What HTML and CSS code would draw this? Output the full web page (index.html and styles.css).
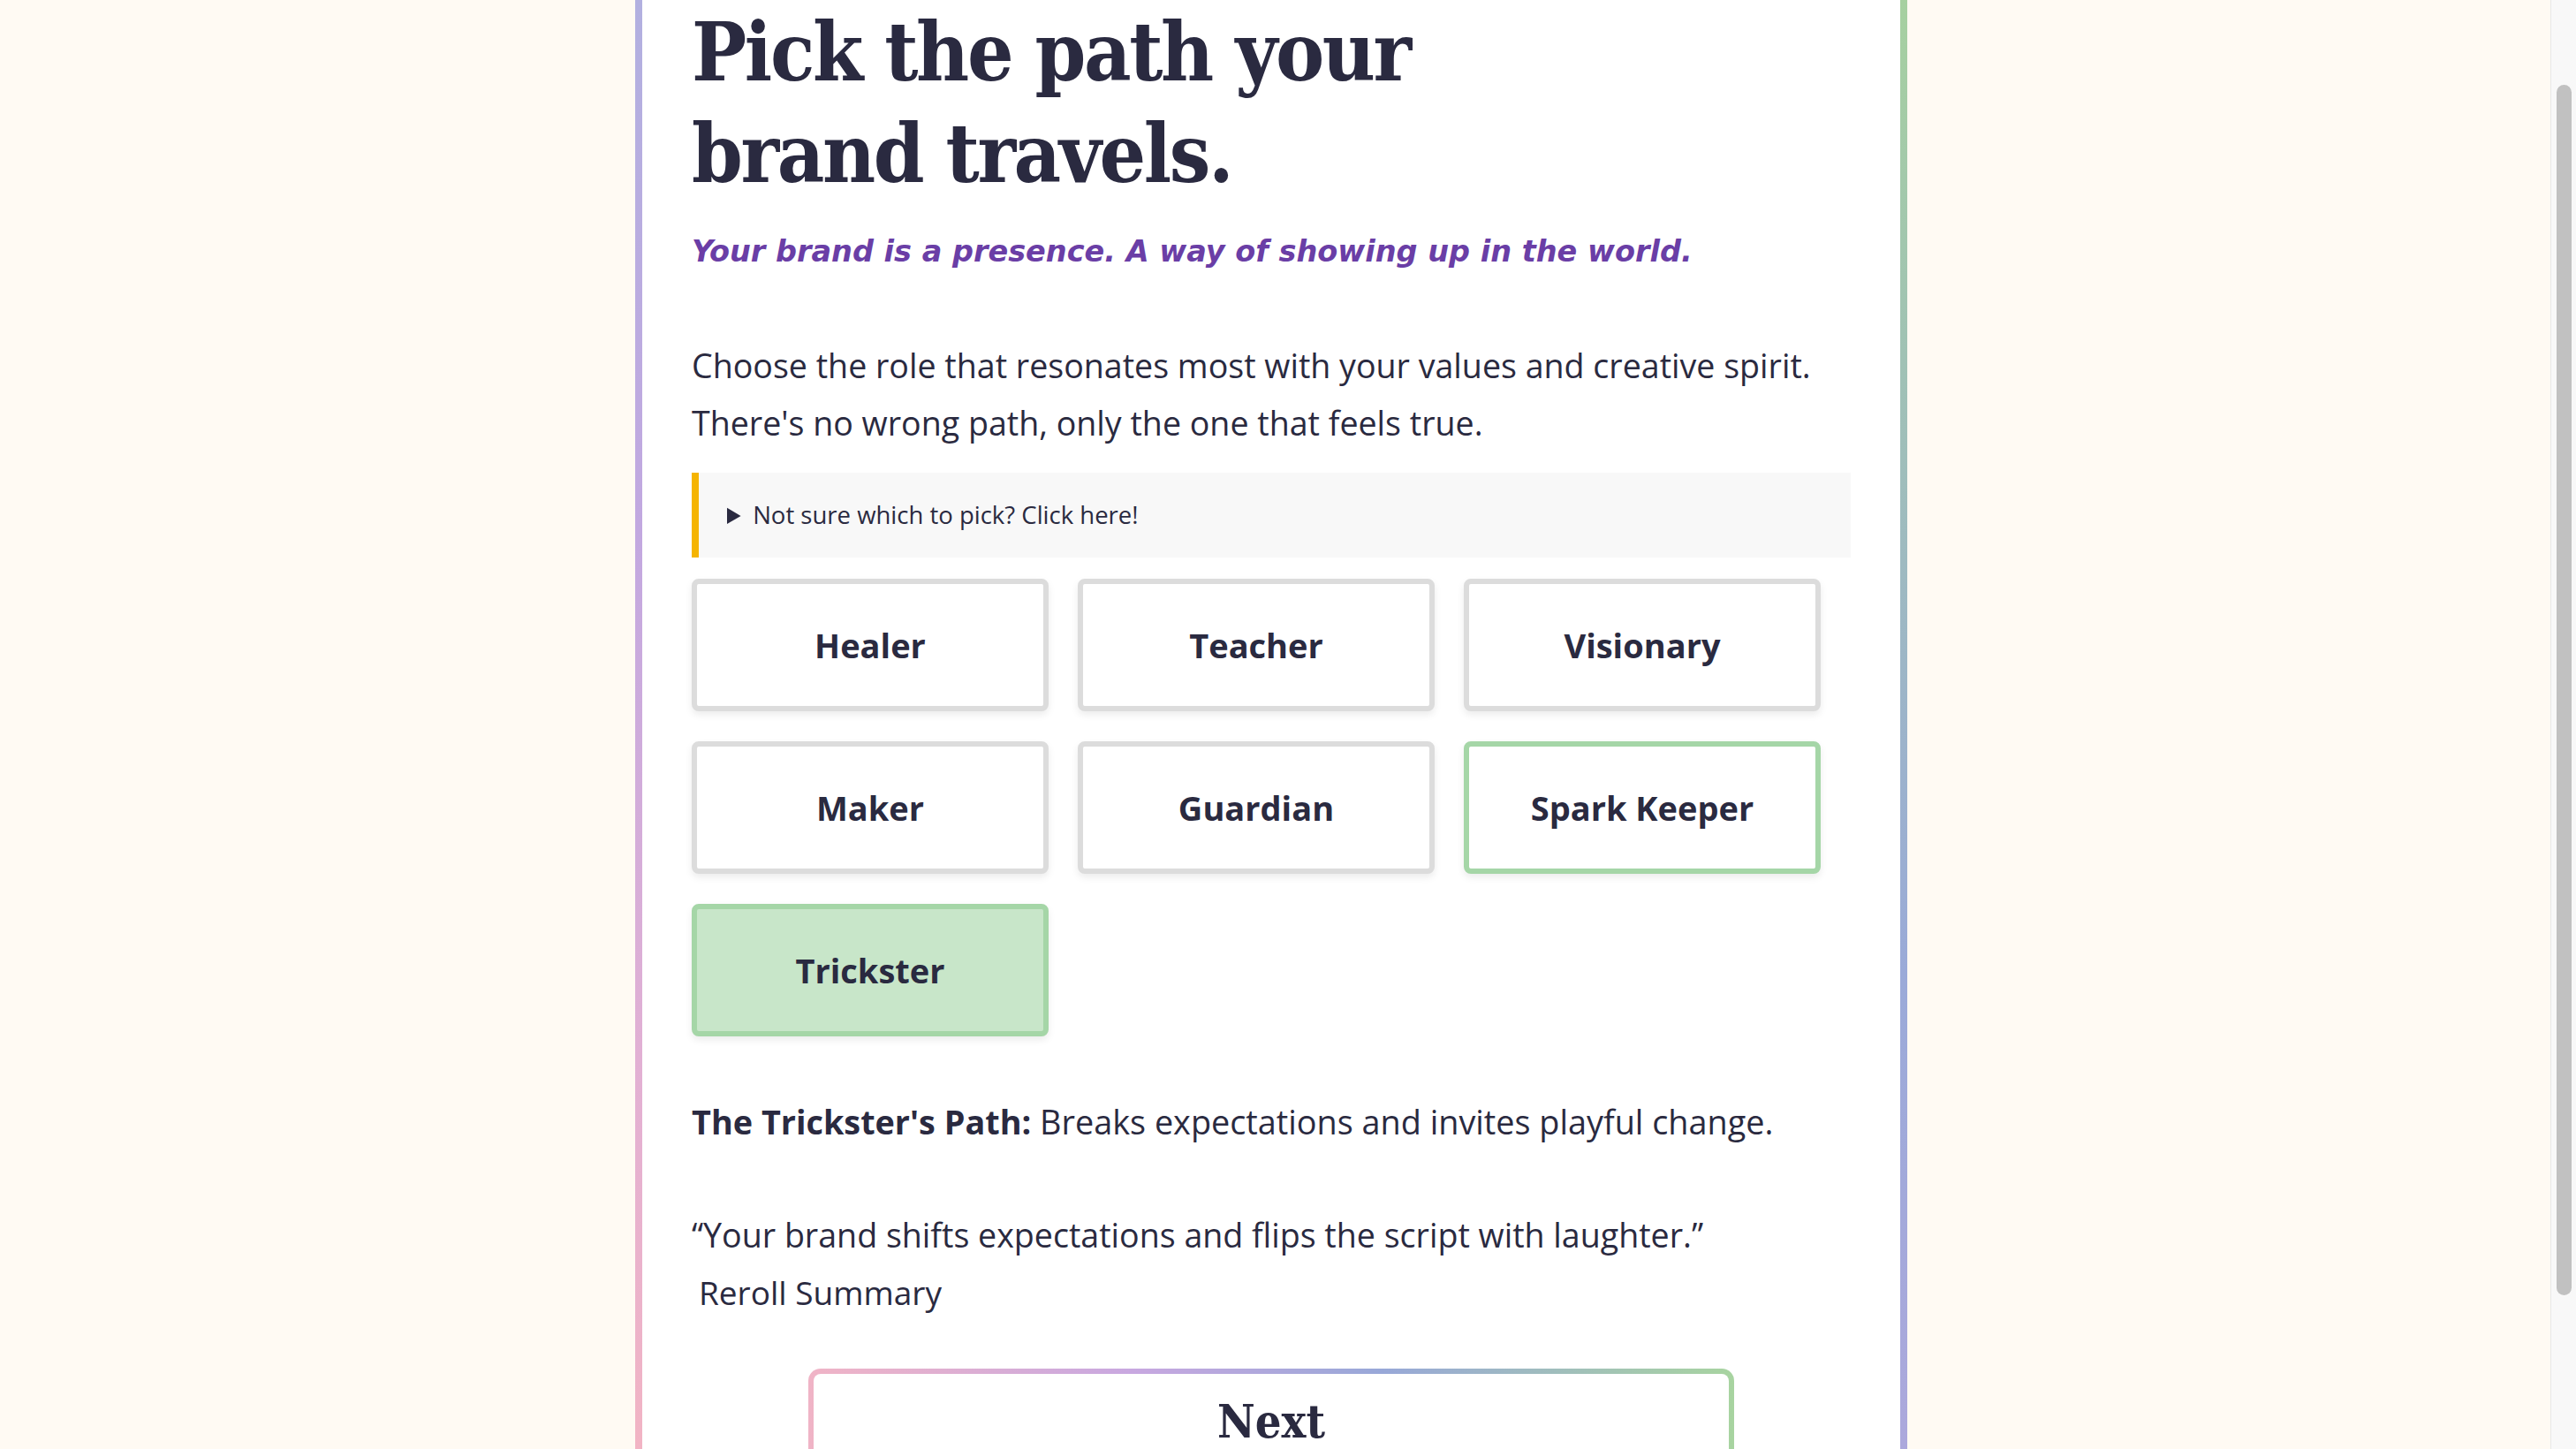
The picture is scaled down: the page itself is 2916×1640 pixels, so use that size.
FILE: index.html
```html
<!DOCTYPE html>
<html lang="en">
<head>
<meta charset="utf-8">
<title>Pick the path your brand travels</title>
<link rel="stylesheet" href="styles.css">
</head>
<body>
<div class="viewport">
  <main class="page">
    <section class="panel">
      <h1 class="title">Pick the path your<br>brand travels.</h1>
      <p class="tagline">Your brand is a presence. A way of showing up in the world.</p>
      <p class="intro">Choose the role that resonates most with your values and creative spirit. There's no wrong path, only the one that feels true.</p>
      <details class="hint">
        <summary>Not sure which to pick? Click here!</summary>
      </details>
      <div class="roles">
        <button class="role">Healer</button>
        <button class="role">Teacher</button>
        <button class="role">Visionary</button>
        <button class="role">Maker</button>
        <button class="role">Guardian</button>
        <button class="role role--hover">Spark Keeper</button>
        <button class="role role--selected">Trickster</button>
      </div>
      <p class="path"><strong>The Trickster's Path:</strong> Breaks expectations and invites playful change.</p>
      <p class="quote">“Your brand shifts expectations and flips the script with laughter.”</p>
      <button class="reroll">Reroll Summary</button>
      <div class="next-wrap">
        <button class="next">Next</button>
      </div>
    </section>
  </main>
  <div class="scrollbar"><div class="thumb"></div></div>
</div>
</body>
</html>
```

FILE: styles.css
```css
html, body {
  margin: 0;
  padding: 0;
  height: 100%;
}
body {
  background: #fffaf3;
  color: #2a2a40;
  font-family: "Open Sans", "Noto Sans", sans-serif;
  overflow: hidden;
}
.viewport {
  display: flex;
  height: 1640px;
  overflow: hidden;
}
.page {
  flex: 1;
  padding-right: 9px;
  overflow: hidden;
}
.panel {
  width: 1312px;
  margin: 0 auto;
  padding: 0 56px 80px;
  min-height: 1800px;
  border-left: 8px solid transparent;
  border-right: 8px solid transparent;
  background:
    linear-gradient(to bottom, #b2b0e0 0px, #c2a8e0 600px, #e2b0d4 1200px, #f2b4c4 1640px) left top / 8px 100% no-repeat border-box,
    linear-gradient(to bottom, #a6d0a0 0px, #a0c2b4 400px, #9aaad8 1100px, #aca8dc 1640px) right top / 8px 100% no-repeat border-box,
    #ffffff;
  background-origin: border-box;
}
.title {
  margin: 0;
  padding-top: 2px;
  font-family: "DejaVu Serif", serif;
  font-stretch: condensed;
  font-weight: 700;
  font-size: 92px;
  line-height: 115px;
  letter-spacing: -2.4px;
  color: #2a2a40;
}
.tagline {
  margin: 28px 0 0;
  font-family: "DejaVu Sans", sans-serif;
  font-style: italic;
  font-weight: 700;
  font-size: 33.5px;
  line-height: 50px;
  color: #6a3ea6;
}
.intro {
  margin: 71px 0 0;
  font-size: 37.6px;
  line-height: 65px;
  color: #2a2a40;
}
.hint {
  margin-top: 24px;
  background: #f8f8f8;
  border-left: 8px solid #f5b400;
}
.hint summary {
  padding: 30px 32px;
  font-size: 27.5px;
  line-height: 36px;
  color: #2a2a40;
  cursor: pointer;
}
.roles {
  margin-top: 24px;
  display: grid;
  grid-template-columns: repeat(3, 404px);
  column-gap: 33px;
  row-gap: 34px;
}
.role {
  height: 150px;
  background: #ffffff;
  border: 6px solid #dcdcdc;
  border-radius: 8px;
  box-shadow: 0 4px 8px rgba(0, 0, 0, 0.08);
  font-family: "Open Sans", sans-serif;
  font-weight: 700;
  font-size: 38px;
  color: #2a2a40;
  padding: 0;
}
.role--hover {
  border-color: #a5d6a7;
}
.role--selected {
  background: #c8e6c9;
  border-color: #a5d6a7;
}
.path {
  margin: 64px 0 0;
  font-size: 37.8px;
  line-height: 65px;
}
.path strong {
  font-weight: 700;
}
.quote {
  margin: 63px 0 0;
  font-size: 37.6px;
  line-height: 65px;
}
.reroll {
  display: block;
  margin: 0;
  padding: 0 8px;
  background: none;
  border: none;
  font-family: "Open Sans", sans-serif;
  font-size: 37px;
  line-height: 65px;
  color: #2a2a40;
}
.next-wrap {
  margin-top: 54px;
  display: flex;
  justify-content: center;
}
.next {
  width: 1048px;
  height: 120px;
  border: 6px solid transparent;
  border-radius: 14px;
  background:
    linear-gradient(#ffffff, #ffffff) padding-box,
    linear-gradient(90deg, #f0b4c6 0%, #c8a8e0 35%, #98a8d8 62%, #a8d4a0 100%) border-box;
  font-family: "DejaVu Serif", serif;
  font-stretch: condensed;
  font-weight: 700;
  font-size: 52px;
  line-height: 60px;
  color: #2a2a40;
  padding: 0;
}
.scrollbar {
  width: 28px;
  flex: none;
  background: #f8f8f8;
  border-left: 1px solid #e8e8e8;
  display: flex;
  justify-content: center;
}
.thumb {
  width: 17px;
  height: 1370px;
  margin-top: 96px;
  background: #c1c1c1;
  border-radius: 9px;
}
```
